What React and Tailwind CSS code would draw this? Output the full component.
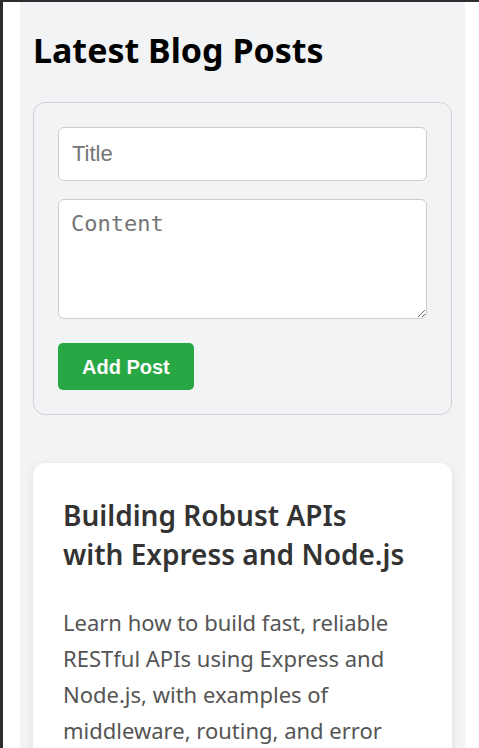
import { useState } from 'react';

const posts = [
    {
        id: 1,
        title: 'Building Robust APIs with Express and Node.js',
        body: 'Learn how to build fast, reliable RESTful APIs using Express and Node.js, with examples of middleware, routing, and error handling.',
    },
];

export default function App() {
    const [title, setTitle] = useState('');
    const [content, setContent] = useState('');

    return (
        <div className="h-[748px] overflow-hidden flex bg-white border-t-2 border-l-[3px] border-[#2b2d30] pl-[17px] pr-[14px]">
            <main className="flex-1 bg-[#f2f3f5] px-[13px] font-['Noto_Sans',sans-serif]">
                <h1 className="mt-[24px] text-[34px] leading-[48px] font-bold text-black">Latest Blog Posts</h1>

                <form
                    className="mt-[28px] border border-[#cfd1d4] rounded-xl p-6 flex flex-col"
                    onSubmit={(e) => e.preventDefault()}
                >
                    <input
                        type="text"
                        placeholder="Title"
                        value={title}
                        onChange={(e) => setTitle(e.target.value)}
                        className="h-[54px] bg-white border border-[#ccc] rounded-md px-[13px] text-[22px] font-['Liberation_Sans',Arial,sans-serif] placeholder:text-[#757575] outline-none"
                    />
                    <textarea
                        placeholder="Content"
                        value={content}
                        onChange={(e) => setContent(e.target.value)}
                        className="mt-[18px] h-[120px] bg-white border border-[#ccc] rounded-md px-3 py-[9px] text-[22px] leading-[30px] font-['DejaVu_Sans_Mono',monospace] placeholder:text-[#757575] outline-none"
                    />
                    <div className="mt-6">
                        <button
                            type="submit"
                            className="h-[47px] px-6 bg-[#28a745] text-white rounded-[5px] text-[20px] font-bold font-['Liberation_Sans',Arial,sans-serif]"
                        >
                            Add Post
                        </button>
                    </div>
                </form>

                <div className="mt-12 flex flex-col gap-6">
                    {posts.map((post) => (
                        <article key={post.id} className="bg-white rounded-xl shadow-[0_2px_10px_rgba(0,0,0,0.08)] px-[30px] pt-[33px] pb-8">
                            <h2 className="text-balance text-[28px] leading-[39px] font-semibold text-[#333]">{post.title}</h2>
                            <p className="mt-[30px] text-[22px] leading-[36px] text-[#555]">{post.body}</p>
                        </article>
                    ))}
                </div>
            </main>
        </div>
    );
}
